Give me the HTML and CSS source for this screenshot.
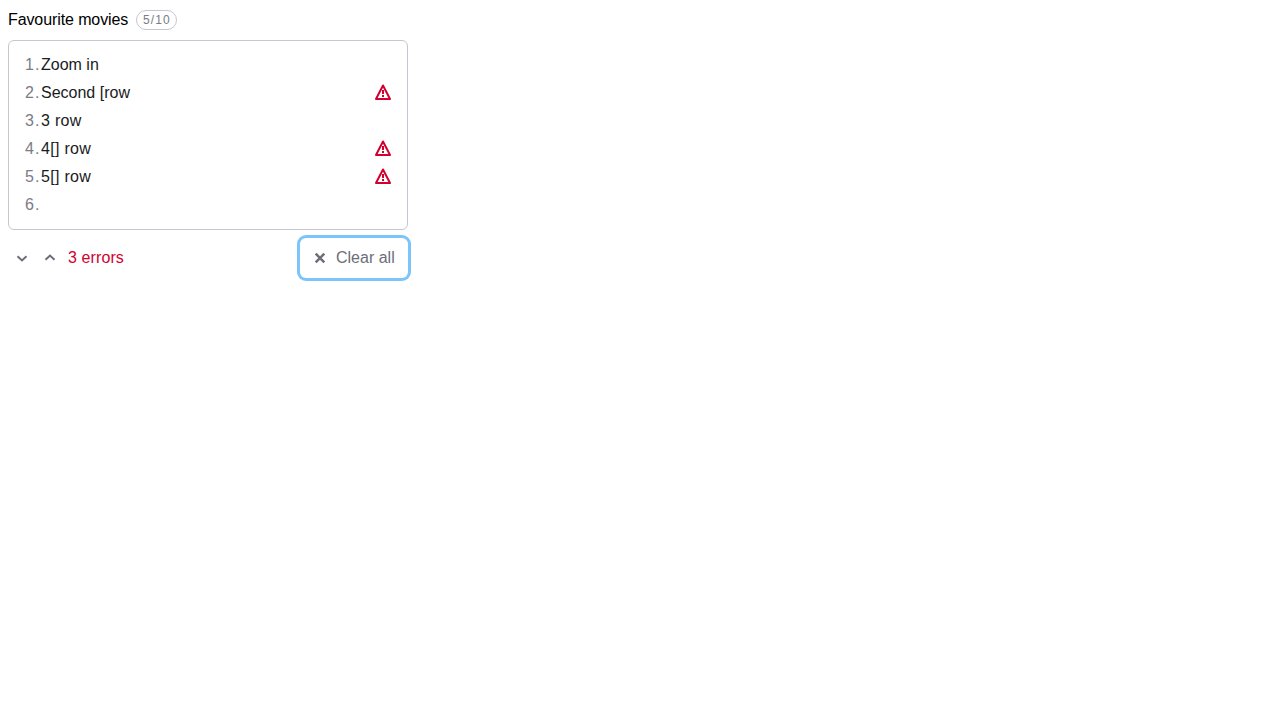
FILE: index.html
```html
<!DOCTYPE html>
<html lang="en">
<head>
<meta charset="utf-8">
<title>Favourite movies</title>
<link rel="stylesheet" href="styles.css">
</head>
<body>
<svg class="sprite" aria-hidden="true">
  <symbol id="warning" viewBox="0 0 16 16"><path d="M8 1.5 15 15H1Z" fill="none" stroke="currentColor" stroke-width="2" stroke-linejoin="round"/><path d="M7 6h2v4H7zM7 11h2v2H7z" fill="currentColor"/></symbol>
</svg>
<main class="bulk">
  <header class="head"><label class="title">Favourite movies</label><span class="counter">5/10</span></header>
  <div class="editor">
    <div class="row"><span class="num">1.</span><span class="text">Zoom in</span></div>
    <div class="row"><span class="num">2.</span><span class="text">Second [row</span><svg class="warn"><use href="#warning"/></svg></div>
    <div class="row"><span class="num">3.</span><span class="text wide">3 row</span></div>
    <div class="row"><span class="num">4.</span><span class="text wide">4[] row</span><svg class="warn"><use href="#warning"/></svg></div>
    <div class="row"><span class="num">5.</span><span class="text wide">5[] row</span><svg class="warn"><use href="#warning"/></svg></div>
    <div class="row"><span class="num">6.</span></div>
  </div>
  <footer class="foot">
    <button class="nav" aria-label="Next error"><svg class="chevron" viewBox="0 0 16 16"><path d="m3.5 6.3 4.5 4.2 4.5-4.2"/></svg></button>
    <button class="nav" aria-label="Previous error"><svg class="chevron" viewBox="0 0 16 16"><path d="m3.5 9.7 4.5-4.2 4.5 4.2"/></svg></button>
    <span class="errors">3 errors</span>
    <button class="clear"><svg class="cross" viewBox="0 0 16 16"><path d="m3.7 3.7 8.6 8.6m0-8.6-8.6 8.6"/></svg><span>Clear all</span></button>
  </footer>
</main>
</body>
</html>
```
FILE: styles.css
```css
body {
  min-height: 704px;
  margin: 8px;
  background: #fff;
  font: 16px/24px "Liberation Sans", Arial, sans-serif;
  color: #191b23;
}
button {
  padding: 0;
  border: 0;
  background: none;
  font: inherit;
  color: #6c6e79;
}
.sprite { display: none; }
.bulk { width: 400px; }
.head {
  display: flex;
  align-items: center;
  gap: 8px;
  height: 24px;
  margin-bottom: 8px;
}
.title {
  width: 120px;
  white-space: nowrap;
  letter-spacing: -.1px;
  color: #000;
}
.counter {
  box-sizing: border-box;
  width: 41px;
  height: 20px;
  padding-left: 6px;
  border: 1px solid #c4c7cf;
  border-radius: 10px;
  font-size: 12px;
  line-height: 18px;
  letter-spacing: 1.1px;
  color: #7a7c86;
}
.editor {
  box-sizing: border-box;
  height: 190px;
  padding: 10px 16px;
  border: 1px solid #c4c7cf;
  border-radius: 6px;
}
.row {
  display: flex;
  align-items: center;
  height: 28px;
}
.num {
  width: 16px;
  letter-spacing: 1.1px;
  color: #7a7c86;
  white-space: nowrap;
}
.text.wide { letter-spacing: .3px; }
.warn {
  width: 16px;
  height: 16px;
  margin: 0 0 2px auto;
  color: #d1002f;
}
.foot {
  display: flex;
  align-items: center;
  height: 40px;
  margin-top: 8px;
}
.nav {
  display: flex;
  align-items: center;
  justify-content: center;
  width: 28px;
  height: 28px;
}
.chevron, .cross {
  width: 16px;
  height: 16px;
  fill: none;
  stroke: currentColor;
  stroke-width: 2;
}
.errors {
  margin-left: 4px;
  letter-spacing: .1px;
  color: #d1002f;
}
.clear {
  display: flex;
  align-items: center;
  gap: 8px;
  box-sizing: border-box;
  width: 108px;
  height: 40px;
  margin-left: auto;
  padding-left: 12px;
  border-radius: 6px;
  box-shadow: 0 0 0 3px #7cc5f9;
  white-space: nowrap;
}
.cross { stroke-width: 2.5; }
```
